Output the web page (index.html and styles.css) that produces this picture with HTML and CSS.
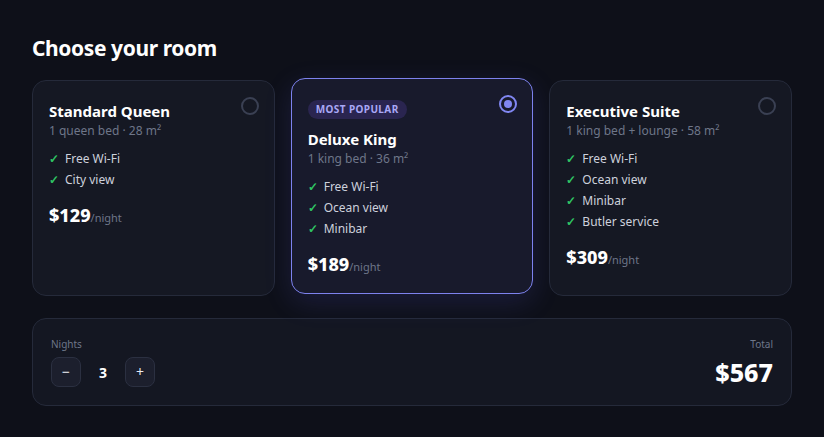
FILE: index.html
```html
<!DOCTYPE html>
<html lang="en">
<head>
<meta charset="utf-8">
<title>Choose your room</title>
<link rel="stylesheet" href="styles.css">
</head>
<body>
<main class="page">
  <h1 class="heading">Choose your room</h1>
  <div class="rooms">
    <div class="card">
      <span class="radio"></span>
      <h2 class="name">Standard Queen</h2>
      <p class="meta">1 queen bed · 28 m²</p>
      <ul class="features">
        <li><span class="check">✓</span>Free Wi-Fi</li>
        <li><span class="check">✓</span>City view</li>
      </ul>
      <p class="price"><span class="amount">$129</span><span class="per">/night</span></p>
    </div>
    <div class="card selected">
      <span class="radio on"></span>
      <span class="badge">MOST POPULAR</span>
      <h2 class="name">Deluxe King</h2>
      <p class="meta">1 king bed · 36 m²</p>
      <ul class="features">
        <li><span class="check">✓</span>Free Wi-Fi</li>
        <li><span class="check">✓</span>Ocean view</li>
        <li><span class="check">✓</span>Minibar</li>
      </ul>
      <p class="price"><span class="amount">$189</span><span class="per">/night</span></p>
    </div>
    <div class="card">
      <span class="radio"></span>
      <h2 class="name">Executive Suite</h2>
      <p class="meta">1 king bed + lounge · 58 m²</p>
      <ul class="features">
        <li><span class="check">✓</span>Free Wi-Fi</li>
        <li><span class="check">✓</span>Ocean view</li>
        <li><span class="check">✓</span>Minibar</li>
        <li><span class="check">✓</span>Butler service</li>
      </ul>
      <p class="price"><span class="amount">$309</span><span class="per">/night</span></p>
    </div>
  </div>
  <div class="summary">
    <div class="nights">
      <div class="label">Nights</div>
      <div class="stepper">
        <button class="step" type="button">−</button>
        <span class="count">3</span>
        <button class="step" type="button">+</button>
      </div>
    </div>
    <div class="total">
      <div class="label">Total</div>
      <div class="sum">$567</div>
    </div>
  </div>
</main>
</body>
</html>
```
FILE: styles.css
```css
* { box-sizing: border-box; }
html, body { margin: 0; padding: 0; }
body {
  background: #0e1019;
  color: #f3f4f8;
  font-family: "Noto Sans", "Open Sans", sans-serif;
  width: 824px;
  height: 437px;
  overflow: hidden;
}
.page {
  padding: 34px 32px;
  display: flex;
  flex-direction: column;
}
.heading {
  margin: 0 0 18px;
  font-size: 21px;
  line-height: 28px;
  font-weight: 700;
  letter-spacing: -0.4px;
  color: #ffffff;
}
.rooms {
  display: grid;
  grid-template-columns: repeat(3, 1fr);
  gap: 16px;
}
.card {
  position: relative;
  background: #151823;
  border: 1px solid #252a3a;
  border-radius: 14px;
  padding: 20px 16px 14px;
  display: flex;
  flex-direction: column;
  align-items: flex-start;
}
.card.selected {
  background: #181a2c;
  border-color: #7d82ee;
  transform: translateY(-2px);
  box-shadow: 0 8px 28px rgba(99, 102, 241, 0.16);
}
.radio {
  position: absolute;
  top: 16px;
  right: 15px;
  width: 18px;
  height: 18px;
  border-radius: 50%;
  border: 2px solid #3a4053;
}
.radio.on {
  border-color: #8187f2;
}
.radio.on::after {
  content: "";
  position: absolute;
  left: 3px;
  top: 3px;
  width: 8px;
  height: 8px;
  border-radius: 50%;
  background: #8187f2;
}
.badge {
  display: inline-block;
  background: #2a2550;
  color: #a9a8f6;
  font-size: 10px;
  font-weight: 700;
  letter-spacing: 0.4px;
  line-height: 19px;
  height: 19px;
  padding: 0 8px;
  border-radius: 10px;
  margin: 1px 0 10px;
}
.name {
  margin: 0;
  font-size: 15px;
  line-height: 20px;
  font-weight: 700;
  color: #ffffff;
}
.meta {
  margin: 1px 0 0;
  font-size: 12px;
  line-height: 18px;
  color: #6e7689;
}
.features {
  list-style: none;
  margin: 8px 0 0;
  padding: 0;
}
.features li {
  font-size: 12px;
  line-height: 21px;
  color: #cdd1dc;
}
.check {
  display: inline-block;
  width: 16px;
  color: #2fc463;
  font-weight: 700;
}
.price {
  margin: 13px 0 0;
  line-height: 24px;
}
.amount {
  font-size: 18px;
  font-weight: 800;
  color: #ffffff;
}
.per {
  font-size: 11px;
  color: #6e7689;
}
.summary {
  margin-top: 22px;
  background: #141722;
  border: 1px solid #252a3a;
  border-radius: 14px;
  padding: 18px;
  display: flex;
  justify-content: space-between;
  align-items: flex-end;
}
.label {
  font-size: 10px;
  line-height: 14px;
  color: #6e7689;
}
.nights .label { margin-bottom: 6px; }
.stepper {
  display: flex;
  align-items: center;
  gap: 8px;
}
.step {
  width: 30px;
  height: 30px;
  border-radius: 8px;
  background: #1c1f2d;
  border: 1px solid #2b3041;
  color: #e8eaf0;
  font-family: "Noto Sans", sans-serif;
  font-size: 14px;
  line-height: 1;
  padding: 0;
  display: flex;
  align-items: center;
  justify-content: center;
}
.count {
  width: 28px;
  text-align: center;
  font-size: 14px;
  font-weight: 700;
  color: #ffffff;
}
.total {
  text-align: right;
}
.total .label { margin-bottom: 6px; }
.sum {
  font-size: 25px;
  line-height: 30px;
  font-weight: 800;
  color: #ffffff;
}
```
